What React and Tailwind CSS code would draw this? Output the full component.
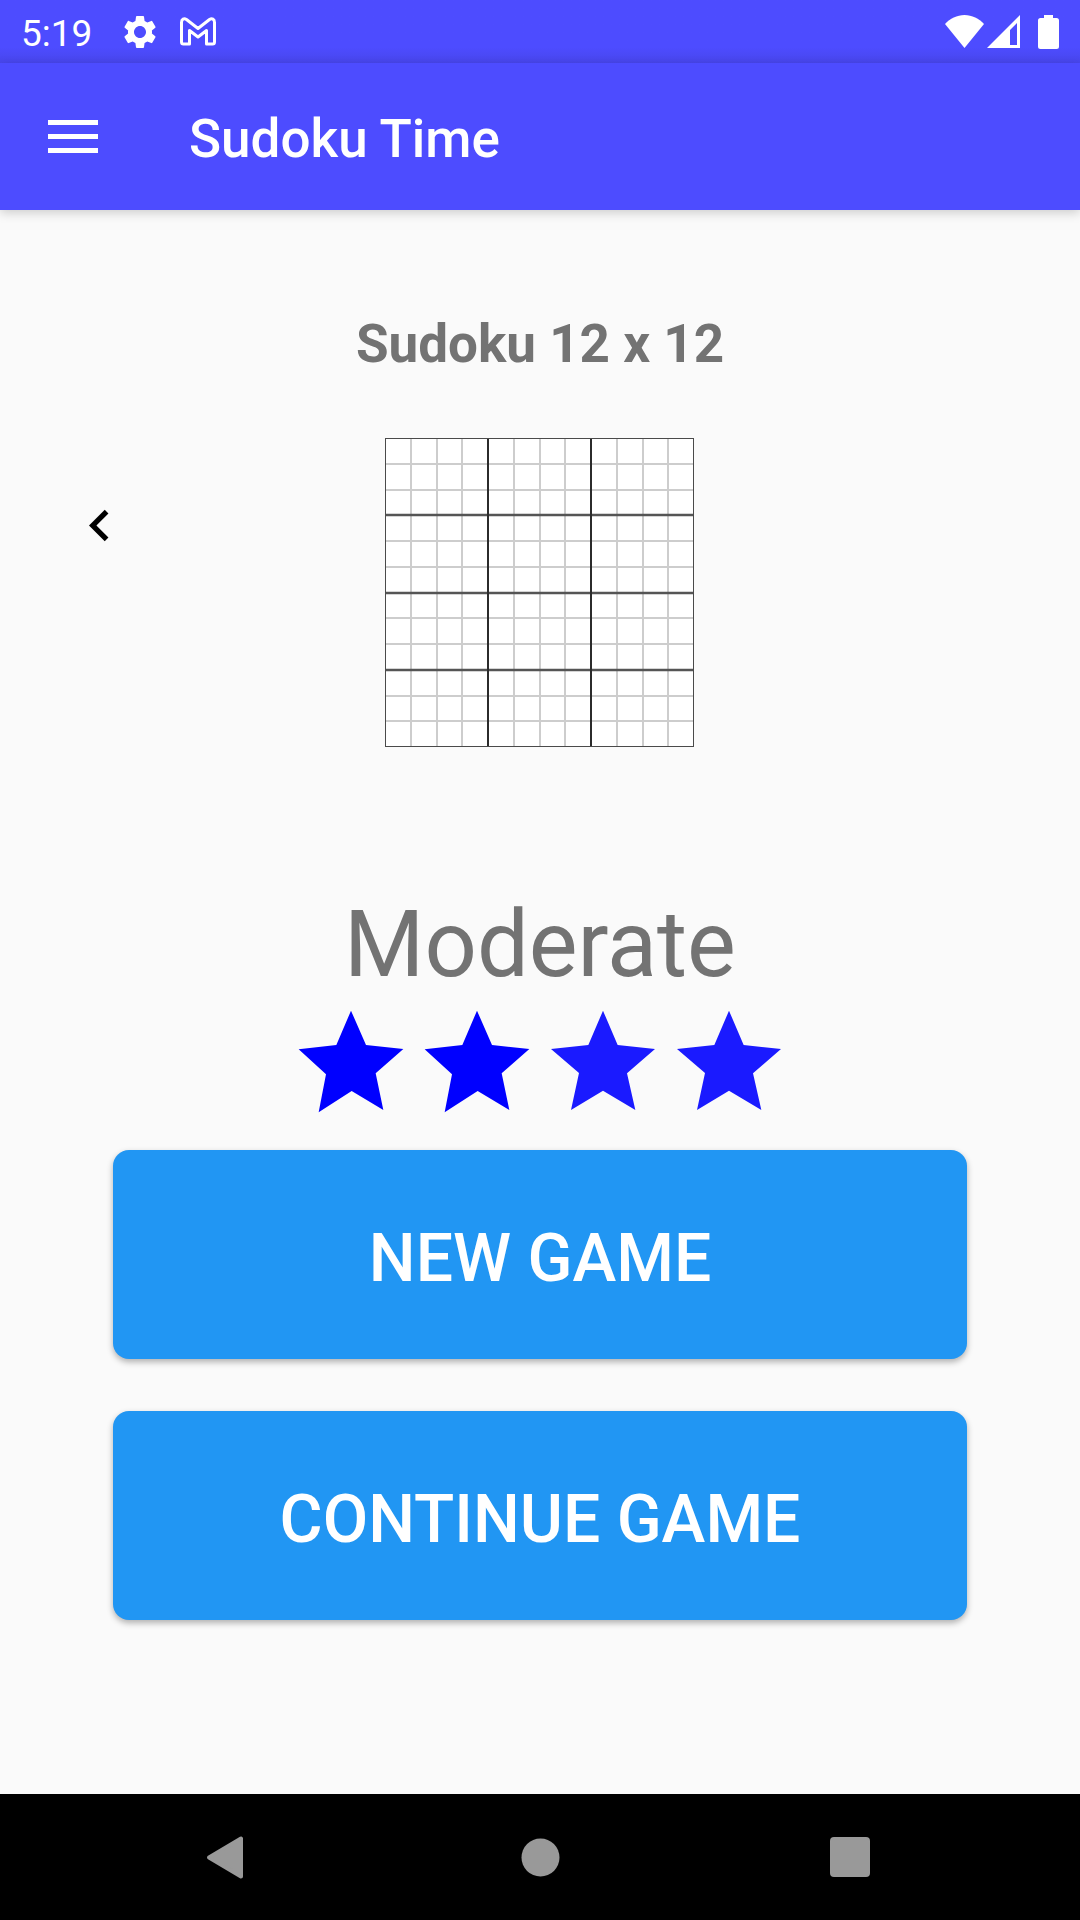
const STAR_BOLD =
  "189,14 234,117 346,129 263,202 286,312 191,255 92,319 114,205 32,130 145,117";
const STAR =
  "189,14 233,117 345,129 261,202 286,312 189,254 93,312 117,201 33,129 145,117";

const stars = [true, true, false, false];

export default function App() {
  return (
    <div className="flex min-h-screen flex-col bg-[#fafafa] font-[Roboto,sans-serif]">
      <StatusBar />
      <Toolbar title="Sudoku Time" />

      <main className="flex flex-1 flex-col items-center pt-[103px]">
        <h2 className="text-[53px]/[62px] font-bold text-[#737373]">Sudoku 12 x 12</h2>

        {/* Game type pager */}
        <div className="mt-[63px] grid w-full grid-cols-[1fr_auto_1fr]">
          <button type="button" aria-label="Previous game type" className="mt-14 ml-[68px] size-[63px]">
            <svg viewBox="0 0 24 24" className="size-full" fill="#000">
              <path d="M15.41 7.41 14 6l-6 6 6 6 1.41-1.41L10.83 12z" />
            </svg>
          </button>
          <BoardPreview />
        </div>

        {/* Difficulty */}
        <p className="mt-[143px] text-[92px]/[108px] text-[#737373]">Moderate</p>
        <div className="mt-[7px] flex" role="img" aria-label="Difficulty">
          {stars.map((bold, i) => (
            <svg key={i} viewBox="0 0 378 378" className="size-[126px]">
              <polygon points={bold ? STAR_BOLD : STAR} fill={bold ? "#0000ff" : "#1a1aff"} />
            </svg>
          ))}
        </div>

        <div className="mt-[18px] flex w-full flex-col gap-[52px] px-[113px]">
          <GameButton>NEW GAME</GameButton>
          <GameButton>CONTINUE GAME</GameButton>
        </div>
      </main>

      <NavigationBar />
    </div>
  );
}

function StatusBar() {
  return (
    <div className="flex h-[63px] items-center bg-linear-to-b from-[#4d4cff] from-75% to-[#4846ec] pr-[21px] pl-[21px] text-white">
      <span className="pt-1 text-[37px]/[44px]">5:19</span>
      <svg viewBox="0 0 24 24" className="ml-7 size-10" fill="currentColor">
        <path d="M19.14 12.94c.04-.3.06-.61.06-.94 0-.32-.02-.64-.07-.94l2.03-1.58a.49.49 0 0 0 .12-.61l-1.92-3.32a.488.488 0 0 0-.59-.22l-2.39.96c-.5-.38-1.03-.7-1.62-.94l-.36-2.54a.484.484 0 0 0-.48-.41h-3.84c-.24 0-.43.17-.47.41l-.36 2.54c-.59.24-1.13.57-1.62.94l-2.39-.96c-.22-.08-.47 0-.59.22L2.74 8.87c-.12.21-.08.47.12.61l2.03 1.58c-.05.3-.09.63-.09.94s.02.64.07.94l-2.03 1.58a.49.49 0 0 0-.12.61l1.92 3.32c.12.22.37.29.59.22l2.39-.96c.5.38 1.03.7 1.62.94l.36 2.54c.05.24.24.41.48.41h3.84c.24 0 .44-.17.47-.41l.36-2.54c.59-.24 1.13-.56 1.62-.94l2.39.96c.22.08.47 0 .59-.22l1.92-3.32c.12-.22.07-.47-.12-.61l-2.01-1.58zM12 15.6c-1.98 0-3.6-1.62-3.6-3.6s1.62-3.6 3.6-3.6 3.6 1.62 3.6 3.6-1.62 3.6-3.6 3.6z" />
      </svg>
      <svg viewBox="0 0 38 30" className="ml-[19px] h-[30px] w-[38px]" fill="none" stroke="currentColor" strokeWidth="3" strokeLinejoin="round">
        <path d="M2.5 5.5C2.5 2 5 1 7.500 2.500L19 11.500 30.500 2.500C33 1 35.500 2 35.500 5.500V25C35.500 26.500 34.500 27 33.500 27H27.500V13.500L19 20 10.500 13.500V27H4.500C3.500 27 2.500 26.500 2.500 25Z" />
      </svg>

      <div className="ml-auto flex items-center">
        <svg viewBox="0 0 39 33" className="h-[33px] w-[39px]" fill="currentColor">
          <path d="M19.5 33 0 9C5 3.5 12 0 19.5 0S34 3.5 39 9Z" />
        </svg>
        <svg viewBox="0 0 33 33" className="ml-[3px] size-[33px]" fill="currentColor" fillRule="evenodd">
          <path d="M33 0V33H0ZM30 8 23 15V30H30Z" />
        </svg>
        <svg viewBox="0 0 21 34" className="ml-[18px] h-[34px] w-[21px]" fill="currentColor">
          <path d="M6 0H15V3H18.5Q21 3 21 5.5V31.5Q21 34 18.5 34H2.5Q0 34 0 31.5V5.5Q0 3 2.5 3H6Z" />
        </svg>
      </div>
    </div>
  );
}

function Toolbar({ title }) {
  return (
    <header className="flex h-[147px] items-center bg-[#4d4cff] pl-12 text-white shadow-[0_3px_10px_rgba(0,0,0,0.18)]">
      <button type="button" aria-label="Open menu" className="flex w-[50px] flex-col gap-[9px]">
        <span className="h-[5px] bg-white" />
        <span className="h-[5px] bg-white" />
        <span className="h-[5px] bg-white" />
      </button>
      <h1 className="ml-[91px] pt-1 text-[53px]/[62px] font-medium">{title}</h1>
    </header>
  );
}

function BoardPreview() {
  const lines = Array.from({ length: 11 }, (_, i) => i + 1);
  const pos = (i) => Math.round((i * 309) / 12);
  const thin = lines.map((i) => `M${pos(i)} 0V309M0 ${pos(i)}H309`).join("");
  // blocks are 4 cells wide and 3 cells high
  const blocks = [4, 8].map((i) => `M${pos(i)} 0V309`).join("");
  const bands = [3, 6, 9].map((i) => `M0 ${pos(i)}H309`).join("");

  return (
    <svg viewBox="0 0 310 310" className="size-[310px]" fill="none">
      <rect width="309" height="309" fill="#fff" />
      <path d={thin} stroke="#cdcdcd" strokeWidth="2" />
      <path d={bands} stroke="#555" strokeWidth="2.5" />
      <path d={blocks} stroke="#2b2b2b" strokeWidth="2" />
      <rect x="0.5" y="0.5" width="308" height="308" stroke="#4a4a4a" />
    </svg>
  );
}

function GameButton({ children }) {
  return (
    <button
      type="button"
      className="h-[209px] w-full rounded-2xl bg-[#2196f3] pt-2 text-[66px]/[78px] font-medium text-white shadow-[0_3px_6px_rgba(0,0,0,0.3)]"
    >
      {children}
    </button>
  );
}

function NavigationBar() {
  return (
    <nav className="flex h-[126px] items-center justify-between bg-black px-[194px]">
      <button type="button" aria-label="Back" className="size-[63px]">
        <svg viewBox="0 0 63 63" className="size-full" fill="#999" stroke="#999" strokeWidth="4" strokeLinejoin="round">
          <path d="M15 31.5 47 12.5V50.5Z" />
        </svg>
      </button>
      <button type="button" aria-label="Home" className="size-[63px]">
        <svg viewBox="0 0 63 63" className="size-full">
          <circle cx="31.5" cy="31.5" r="19" fill="#999" />
        </svg>
      </button>
      <button type="button" aria-label="Recent apps" className="flex size-[63px] items-center justify-end">
        <span className="mr-4 size-10 rounded-sm bg-[#999]" />
      </button>
    </nav>
  );
}
